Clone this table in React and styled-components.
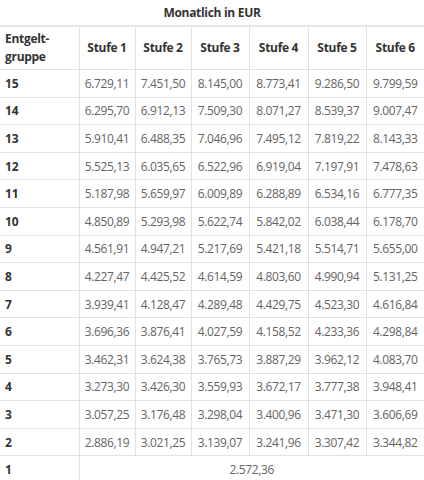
import React from "react";
import styled, { createGlobalStyle } from "styled-components";

const GlobalStyle = createGlobalStyle`
  body {
    margin: 0;
    background: #fff;
    font-family: "Open Sans", "Noto Sans", sans-serif;
  }
`;

const Wrapper = styled.div`
  width: 424px;
`;

const Title = styled.div`
  height: 25px;
  display: flex;
  align-items: center;
  justify-content: center;
  font-size: 12px;
  font-weight: 700;
  color: #333;
  letter-spacing: -0.3px;
`;

const Table = styled.table`
  width: 424px;
  border-collapse: collapse;
  table-layout: fixed;
  border-top: 2px solid #e6e6e6;
`;

const HeadCell = styled.th`
  height: 42px;
  padding: 0;
  font-size: 12px;
  font-weight: 700;
  color: #333;
  letter-spacing: -0.3px;
  line-height: 18px;
  text-align: ${(p) => (p.$left ? "left" : "center")};
  padding-left: ${(p) => (p.$left ? "5px" : "0")};
  border-bottom: 1px solid #e2e2e2;
  border-left: ${(p) => (p.$left ? "none" : "1px solid #e2e2e2")};
`;

const Row = styled.tr`
  height: 27.6px;
`;

const GroupCell = styled.td`
  padding: 0 0 0 5px;
  font-size: 12px;
  font-weight: 700;
  color: #333;
  border-bottom: 1px solid #e2e2e2;
`;

const ValueCell = styled.td`
  padding: 0;
  text-align: center;
  font-size: 12px;
  color: #646464;
  letter-spacing: -0.35px;
  border-bottom: 1px solid #e2e2e2;
  border-left: 1px solid #e2e2e2;
`;

const widths = [79, 56, 56, 58, 59, 58, 58];

const rows = [
  ["15", "6.729,11", "7.451,50", "8.145,00", "8.773,41", "9.286,50", "9.799,59"],
  ["14", "6.295,70", "6.912,13", "7.509,30", "8.071,27", "8.539,37", "9.007,47"],
  ["13", "5.910,41", "6.488,35", "7.046,96", "7.495,12", "7.819,22", "8.143,33"],
  ["12", "5.525,13", "6.035,65", "6.522,96", "6.919,04", "7.197,91", "7.478,63"],
  ["11", "5.187,98", "5.659,97", "6.009,89", "6.288,89", "6.534,16", "6.777,35"],
  ["10", "4.850,89", "5.293,98", "5.622,74", "5.842,02", "6.038,44", "6.178,70"],
  ["9", "4.561,91", "4.947,21", "5.217,69", "5.421,18", "5.514,71", "5.655,00"],
  ["8", "4.227,47", "4.425,52", "4.614,59", "4.803,60", "4.990,94", "5.131,25"],
  ["7", "3.939,41", "4.128,47", "4.289,48", "4.429,75", "4.523,30", "4.616,84"],
  ["6", "3.696,36", "3.876,41", "4.027,59", "4.158,52", "4.233,36", "4.298,84"],
  ["5", "3.462,31", "3.624,38", "3.765,73", "3.887,29", "3.962,12", "4.083,70"],
  ["4", "3.273,30", "3.426,30", "3.559,93", "3.672,17", "3.777,38", "3.948,41"],
  ["3", "3.057,25", "3.176,48", "3.298,04", "3.400,96", "3.471,30", "3.606,69"],
  ["2", "2.886,19", "3.021,25", "3.139,07", "3.241,96", "3.307,42", "3.344,82"],
];

export default function App() {
  return (
    <Wrapper>
      <GlobalStyle />
      <Title>Monatlich in EUR</Title>
      <Table>
        <colgroup>
          {widths.map((w, i) => (
            <col key={i} style={{ width: w }} />
          ))}
        </colgroup>
        <thead>
          <tr>
            <HeadCell $left>
              Entgelt-
              <br />
              gruppe
            </HeadCell>
            {[1, 2, 3, 4, 5, 6].map((n) => (
              <HeadCell key={n}>Stufe {n}</HeadCell>
            ))}
          </tr>
        </thead>
        <tbody>
          {rows.map(([group, ...values]) => (
            <Row key={group}>
              <GroupCell>{group}</GroupCell>
              {values.map((v, i) => (
                <ValueCell key={i}>{v}</ValueCell>
              ))}
            </Row>
          ))}
          <Row>
            <GroupCell>1</GroupCell>
            <ValueCell colSpan={6}>2.572,36</ValueCell>
          </Row>
        </tbody>
      </Table>
    </Wrapper>
  );
}
